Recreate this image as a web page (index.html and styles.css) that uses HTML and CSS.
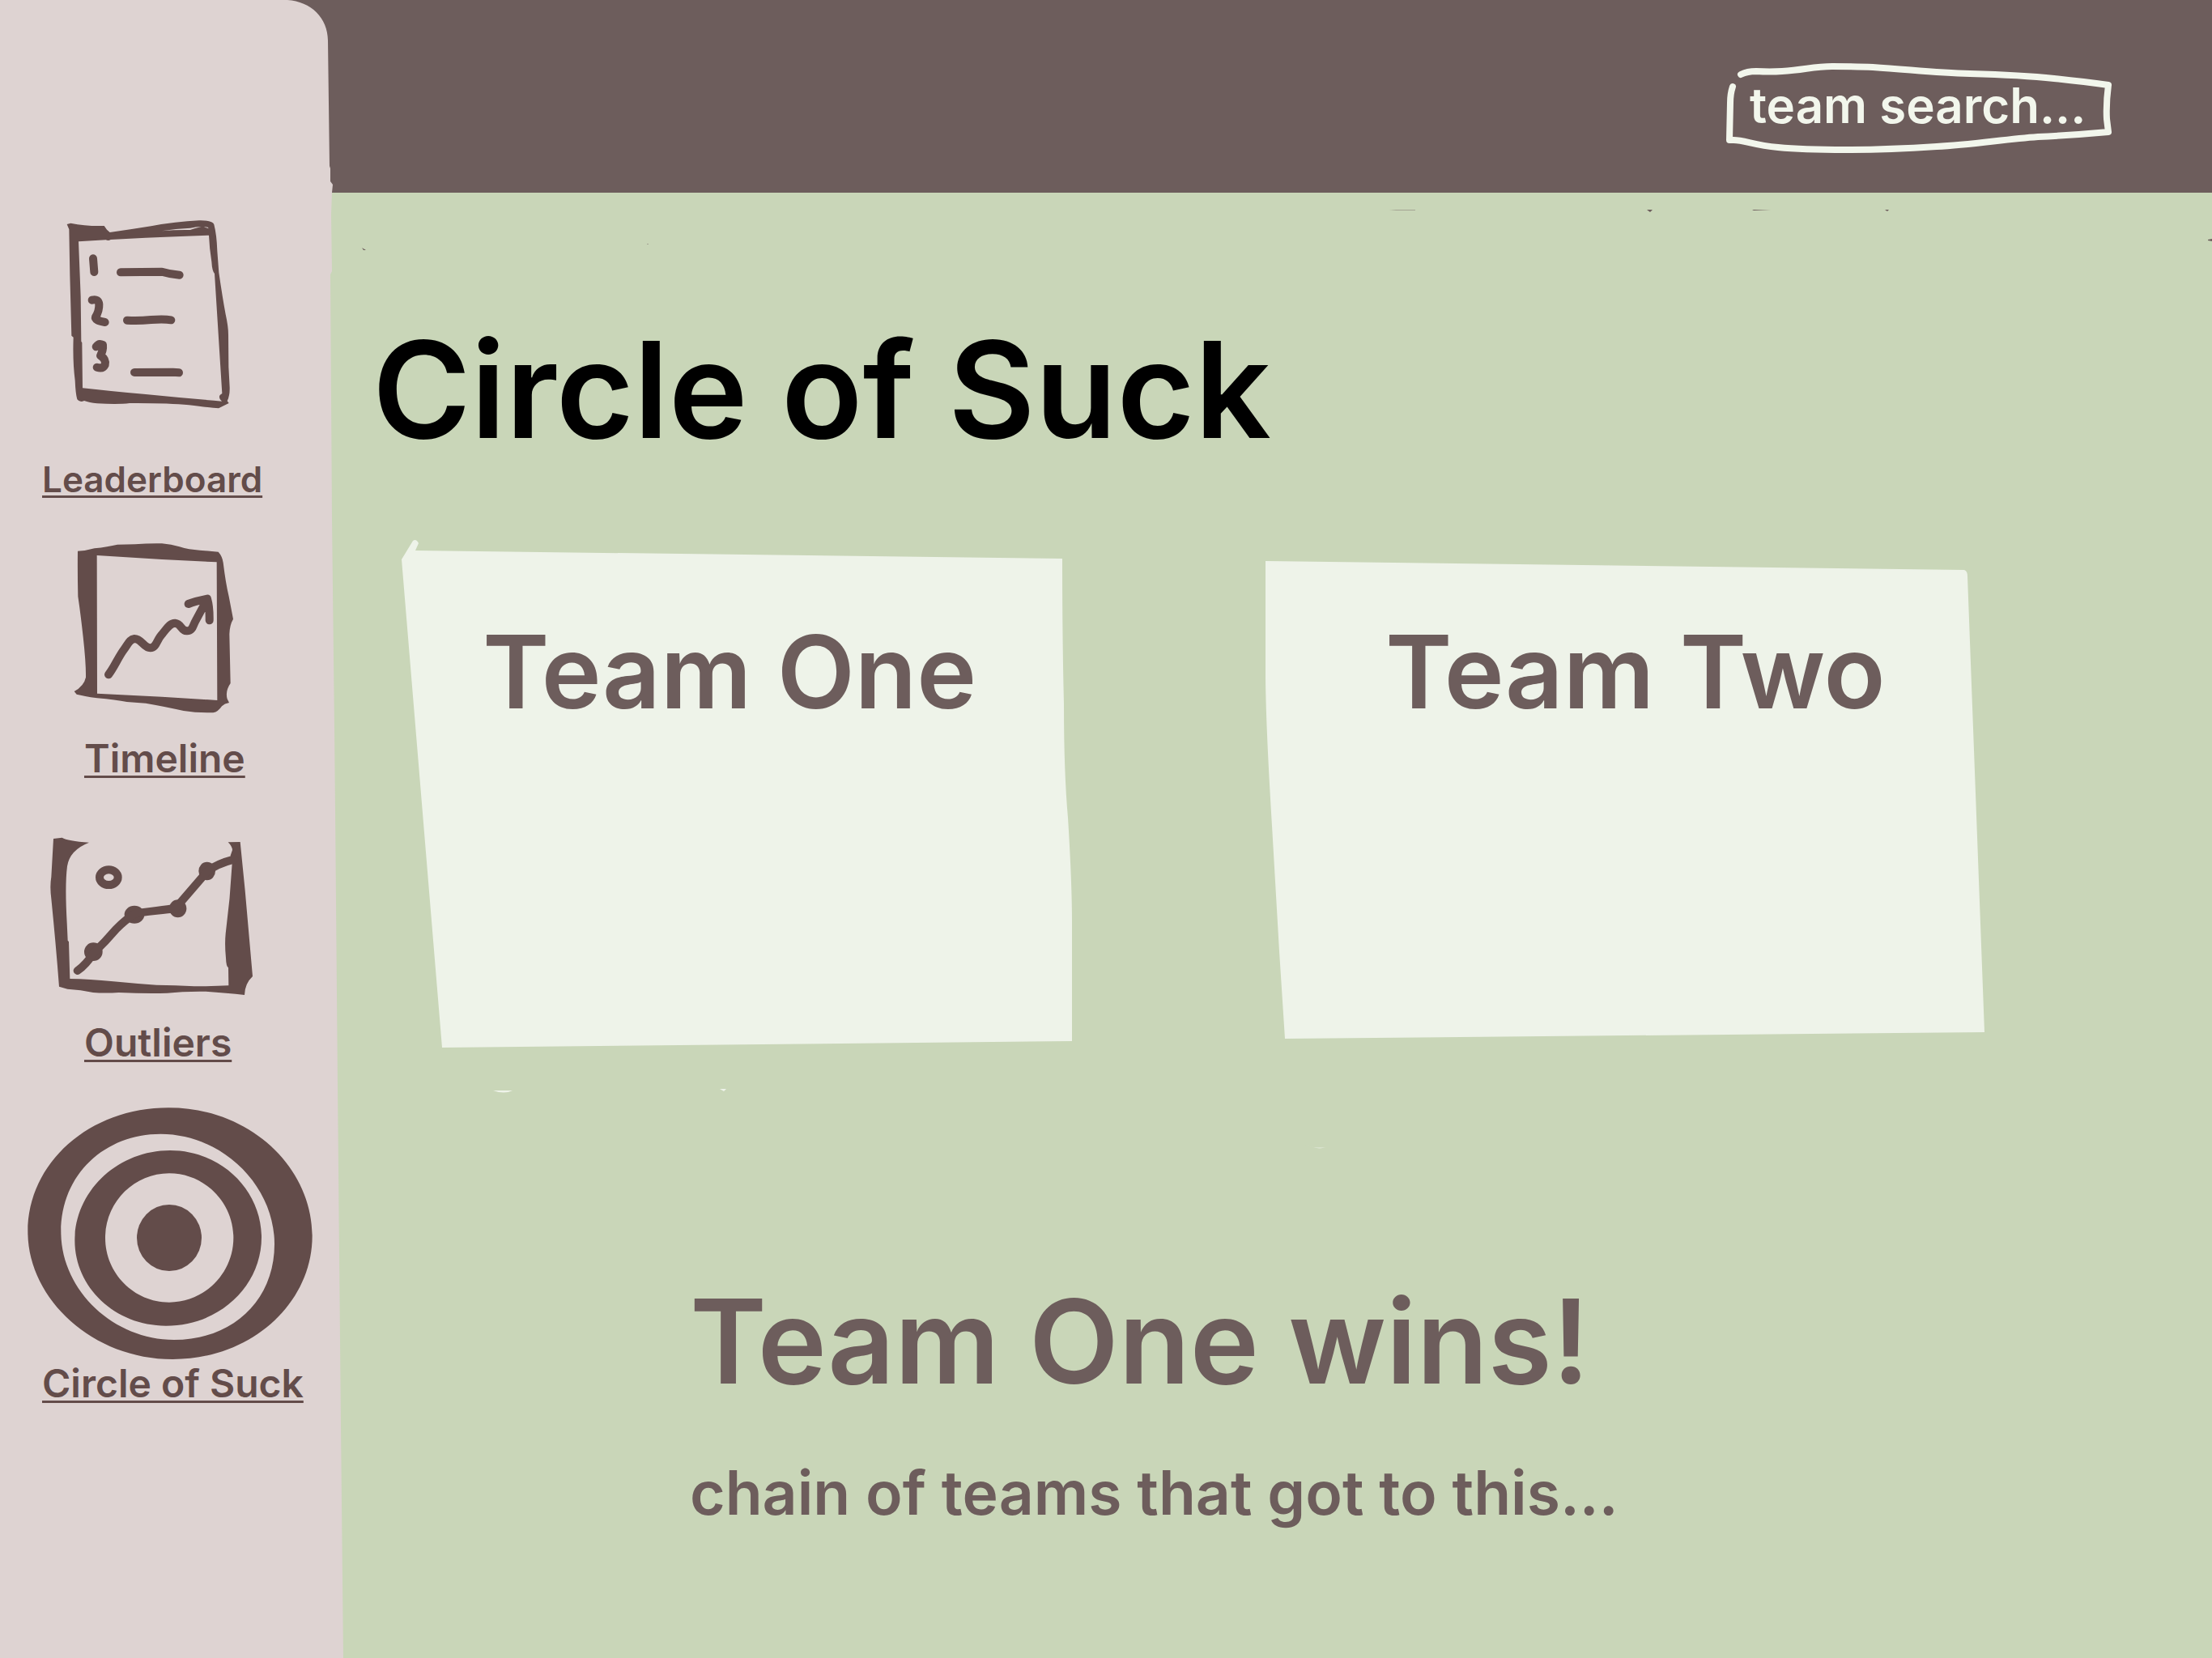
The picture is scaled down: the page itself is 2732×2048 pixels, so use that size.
FILE: index.html
```html
<!DOCTYPE html>
<html lang="en">
<head>
<meta charset="utf-8">
<meta name="viewport" content="width=device-width, initial-scale=1">
<title>Circle of Suck</title>
<link rel="stylesheet" href="styles.css">
</head>
<body>
<div class="app">
  <header class="topbar">
    <form class="search" role="search">
      <svg class="search-frame" viewBox="2132 76 478 114" preserveAspectRatio="none" aria-hidden="true">
        <path d="M2150 92Q2158 88 2169 88Q2186 89 2201 88C2230 86 2240 82 2263 82C2282 82 2295 82 2313 83C2360 86 2390 90 2433 91C2470 92 2500 93 2537 97Q2574 101 2604 105Q2601 128 2602 147L2604 163Q2560 167 2517 169C2475 172 2435 179 2392 181Q2330 185 2280 185Q2225 185 2196 182C2165 179 2155 173 2141 173L2136 173L2137 127Q2137 116 2140 107"/>
      </svg>
      <input class="search-input" type="text" aria-label="team search" placeholder="team search...">
    </form>
  </header>

  <aside class="sidebar">
    <svg class="sidebar-shape" viewBox="0 0 424 2048" preserveAspectRatio="none" aria-hidden="true">
      <path d="M0 0H355C384 2 405 22 405 50L407 205L408 208V224L411 228L410 238L409 265L410 335L408 339L410 640L413 900L414 1000L417 1340L421 1760L424 2048H0Z"/>
    </svg>
    <nav class="nav">
      <a class="nav-link nav-link-near" href="#leaderboard">
        <svg class="nav-icon" viewBox="0 72 1272 900" aria-hidden="true">
          <path d="M248 111L262 107Q320 119 386 117L396 131L407 141Q480 131 560 118Q650 101 738 97Q788 96 793 112Q803 150 805 210L811 290Q824 380 836 445Q846 490 846 520L847 640L851 715Q852 745 842 766L848 774L810 793Q780 791 700 781Q620 773 480 774Q440 779 360 775Q330 772 312 765Q296 773 286 760Q280 740 278 690Q269 620 272 530L265 524L259 300L256 130ZM291 175L299 378L301 545L304 550L306 718Q400 729 540 741Q680 755 822 767Q808 755 815 744L823 738L795 294Q786 285 784 250Q776 200 774 152Q650 156 540 161L410 168Q402 174 392 169Z" fill-rule="evenodd"/>
          <path class="paper" d="M600 136Q650 127 706 125Q725 121 746 120Q715 128 705 132Q650 131 600 136ZM755 121L770 122L773 127Z"/>
          <path class="pen" d="M345 238L349 288M447 289L600 287Q630 296 665 299M341 392Q365 386 367 408Q368 432 354 455Q350 467 389 474M471 467Q510 470 560 465Q610 462 634 466M356 565Q366 550 381 558Q383 578 372 598Q394 612 389 632Q381 648 359 641M498 660L640 659L663 661"/>
        </svg>
        <span class="nav-label nav-label-small">Leaderboard</span>
      </a>
      <a class="nav-link" href="#timeline">
        <svg class="nav-icon" viewBox="0 -60 1272 867" aria-hidden="true">
          <path d="M288 122Q320 121 350 112Q400 106 435 98L500 97Q550 93 600 94Q635 97 665 106Q700 117 740 119L809 125Q824 142 827 165Q836 240 848 290L864 374Q851 396 850 430L854 612Q834 641 842 670L849 684Q832 687 822 697Q808 718 790 721Q730 722 680 714Q620 700 540 686L470 681Q430 673 360 667Q310 659 284 653L275 642Q311 622 318 590Q319 540 308 440Q298 350 289 290Q287 200 288 122ZM359 138L360 650L600 662L805 675L803 163L600 153Z" fill-rule="evenodd"/>
          <path class="pen" d="M402 580C425 550 438 515 460 486C475 466 480 449 498 447C525 447 532 481 557 481C580 481 580 450 602 428C620 407 630 388 649 389C672 391 670 417 692 418C715 419 715 395 725 380L768 300M698 318Q720 309 768 299Q777 330 776 379"/>
        </svg>
        <span class="nav-label">Timeline</span>
      </a>
      <a class="nav-link" href="#outliers">
        <svg class="nav-icon" viewBox="0 -105 1272 885" aria-hidden="true">
          <path d="M198 108L230 104Q250 116 330 122Q258 150 249 210Q240 280 248 420L251 485L255 490L259 627Q330 628 420 637Q500 645 580 650Q650 650 720 655Q790 655 847 652L846 586Q838 582 837 550Q832 500 836 460Q853 330 860 200L854 170L861 150Q860 136 845 121L890 120L908 300L936 618Q907 645 906 687Q840 679 760 674Q680 673 620 680Q540 682 440 678Q390 681 345 678Q300 668 250 665L219 656Q207 500 190 330Q184 285 190 250Z"/>
          <ellipse cx="346" cy="527" rx="34" ry="34"/>
          <ellipse cx="498" cy="389" rx="37" ry="33"/>
          <ellipse cx="659" cy="367" rx="32" ry="33"/>
          <ellipse cx="767" cy="228" rx="31" ry="34"/>
          <ellipse class="pen" cx="403" cy="251" rx="34" ry="28"/>
          <path class="pen" d="M287 597Q320 574 346 532Q390 490 430 443Q465 408 498 387C530 378 590 375 650 366L767 230Q800 202 868 184"/>
        </svg>
        <span class="nav-label">Outliers</span>
      </a>
      <a class="nav-link nav-link-near" href="#circle" aria-current="page">
        <svg class="nav-icon" viewBox="0 -72 1272 1095" aria-hidden="true">
          <path d="M625 85C930 85 1157 310 1157 560C1157 810 930 1017 640 1017C340 1017 103 790 103 545C103 290 330 85 625 85ZM595 182C390 182 226 330 226 545C226 760 420 945 645 945C860 945 1017 800 1017 590C1017 370 820 182 595 182Z" fill-rule="evenodd"/>
          <path d="M630 243C820 243 969 390 969 565C969 745 815 893 615 893C425 893 277 750 277 577C277 395 435 243 630 243ZM627 328C497 328 390 435 390 567C390 699 497 806 627 806C757 806 865 699 865 567C865 435 757 328 627 328Z" fill-rule="evenodd"/>
          <ellipse cx="627" cy="567" rx="120" ry="123"/>
        </svg>
        <span class="nav-label">Circle of Suck</span>
      </a>
    </nav>
  </aside>

  <main class="main">
    <svg class="specks" viewBox="0 238 2732 1810" preserveAspectRatio="none" aria-hidden="true">
      <path class="speck-dark" d="M447 306L452 309L449 309ZM2034 259H2041L2038 262ZM2164 259L2187 259L2166 260ZM2328 259H2333L2331 261ZM2727 296L2732 295V298L2727 297Z"/>
      <path class="speck-pale" d="M799 301H801V302H799ZM1716 259H1748V260H1724Z"/>
      <path class="speck-light" d="M609 1347H633Q623 1352 609 1347ZM889 1345H897L894 1348Z"/>
      <path class="speck-faint" d="M1609 1414L1622 1417H1637L1630 1419Z"/>
    </svg>
    <h1 class="title">Circle of Suck</h1>
    <div class="teams">
      <section class="team team-one">
        <svg class="team-paper" viewBox="496 666 828 628" preserveAspectRatio="none" aria-hidden="true">
          <path d="M496 691L510 668Q514 665 517 671L513 680L1312 690Q1312 790 1314 870Q1314 955 1319 1010Q1324 1090 1324 1140V1286L546 1294Z"/>
        </svg>
        <h2 class="team-name">Team One</h2>
      </section>
      <section class="team team-two">
        <svg class="team-paper" viewBox="1563 666 888 628" preserveAspectRatio="none" aria-hidden="true">
          <path d="M1563 693L2426 704Q2430 705 2430 712L2451 1275L1587 1283L1580 1175L1571 1020Q1563 890 1563 830Z"/>
        </svg>
        <h2 class="team-name">Team Two</h2>
      </section>
    </div>
    <section class="result">
      <h2 class="result-title">Team One wins!</h2>
      <p class="result-chain">chain of teams that got to this...</p>
    </section>
  </main>
</div>
</body>
</html>
```
FILE: styles.css
```css
:root {
  --plum: #6d5d5c;
  --ink: #634c4a;
  --blush: #ded3d2;
  --sage: #c9d6b8;
  --paper: #eef3e9;
  --chalk: #f2f6ec;
}

* {
  box-sizing: border-box;
}

body {
  margin: 0;
  background: var(--sage);
  color: var(--plum);
  font-family: Inter, "Liberation Sans", sans-serif;
  font-weight: 600;
}

h1,
h2,
p {
  margin: 0;
  font-weight: 600;
}

.app {
  display: grid;
  grid-template-columns: 424px 1fr;
  grid-template-rows: 238px 1fr;
  min-height: 100vh;
}

/* Top bar runs under the rounded corner of the sidebar */
.topbar {
  grid-area: 1 / 1 / 2 / 3;
  display: flex;
  justify-content: flex-end;
  align-items: flex-start;
  padding: 76px 122px 0 424px;
  background: var(--plum);
}

.search {
  position: relative;
  width: 478px;
  height: 114px;
}

.search-frame {
  position: absolute;
  inset: 0;
  width: 100%;
  height: 100%;
  overflow: visible;
  fill: none;
  stroke: var(--chalk);
  stroke-width: 8;
  stroke-linecap: round;
  stroke-linejoin: round;
}

.search-input {
  position: relative;
  width: 100%;
  height: 108px;
  padding: 0 16px 0 29px;
  border: 0;
  outline: 0;
  background: none;
  color: var(--chalk);
  font: inherit;
  font-size: 60px;
}

.search-input::placeholder {
  color: var(--chalk);
  opacity: 1;
}

.sidebar {
  grid-area: 1 / 1 / 3 / 2;
  position: relative;
}

.sidebar-shape {
  position: absolute;
  inset: 0;
  width: 100%;
  height: 100%;
  fill: var(--blush);
}

.nav {
  position: relative;
  display: flex;
  flex-direction: column;
  padding-top: 264px;
}

.nav-link {
  display: flex;
  flex-direction: column;
  color: var(--ink);
  text-decoration: none;
}

.nav-icon {
  display: block;
  width: 100%;
  fill: currentColor;
}

.nav-icon .pen {
  fill: none;
  stroke: currentColor;
  stroke-width: 30;
  stroke-linecap: round;
  stroke-linejoin: round;
}

.nav-icon .paper {
  fill: var(--blush);
}

.nav-label {
  padding-left: 104px;
  font-size: 48px;
  line-height: 56px;
  white-space: nowrap;
  text-decoration: underline;
  text-decoration-thickness: 3px;
  text-underline-offset: 4px;
  text-decoration-skip-ink: none;
}

.nav-label-small {
  font-size: 44px;
}

.nav-link-near .nav-label {
  padding-left: 52px;
}

.main {
  grid-area: 2 / 1 / 3 / 3;
  position: relative;
  padding: 143px 281px 120px 460px;
}

.specks {
  position: absolute;
  inset: 0;
  width: 100%;
  height: 100%;
}

.speck-dark {
  fill: var(--plum);
}

.speck-pale {
  fill: var(--plum);
  opacity: 0.4;
}

.speck-light {
  fill: var(--paper);
}

.speck-faint {
  fill: var(--paper);
  opacity: 0.4;
}

.title {
  color: #000;
  font-size: 165px;
  line-height: 200px;
}

.teams {
  display: grid;
  grid-template-columns: 828fr 888fr;
  column-gap: 239px;
  margin: 85px 0 0 36px;
}

.team {
  position: relative;
  min-height: 628px;
  padding-top: 89px;
}

.team-one {
  padding-left: 100px;
}

.team-two {
  padding-left: 148px;
}

.team-paper {
  position: absolute;
  inset: 0;
  width: 100%;
  height: 100%;
  fill: var(--paper);
}

.team-name {
  position: relative;
  font-size: 125px;
  line-height: 150px;
}

.result {
  margin: 275px 0 0 392px;
}

.result-title {
  font-size: 144px;
  line-height: 176px;
}

.result-chain {
  margin-top: 54px;
  font-size: 75px;
  line-height: 90px;
}
```
